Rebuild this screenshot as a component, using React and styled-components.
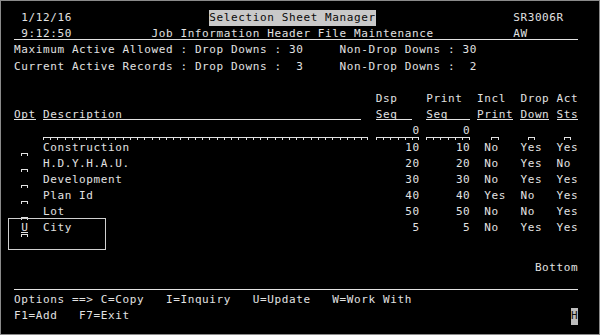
import React from "react";
import styled, { createGlobalStyle } from "styled-components";

// 5250 screen geometry, measured off the screenshot
const CH = 7.235;
const ROW = 16.2;
const COLS = 78;
const FG = "#e2e2e2";

const GlobalStyle = createGlobalStyle`
  html, body {
    margin: 0;
    padding: 0;
    background: #000;
  }
  body {
    width: 600px;
    height: 335px;
    overflow: hidden;
  }
`;

const Screen = styled.div`
  position: relative;
  box-sizing: border-box;
  width: 600px;
  height: 335px;
  padding: 9px 0 0 13px;
  background: #000;
  border: 1px solid #8a8a8a;
  color: ${FG};
  font-family: "DejaVu Sans Mono", "Liberation Mono", monospace;
  font-size: 11px;
  letter-spacing: ${(CH - 6.622).toFixed(3)}px;
`;

const Row = styled.div`
  display: grid;
  grid-template-columns: repeat(${COLS}, ${CH}px);
  grid-template-rows: ${ROW}px;
  width: ${COLS * CH}px;
  height: ${ROW}px;
  line-height: ${ROW}px;
  margin-top: ${(p) => p.$gap || 0}px;
  ${(p) =>
    p.$rule &&
    `background: linear-gradient(${FG}, ${FG}) no-repeat 0 13px / 100% 1px;`}
`;

const Rule = styled.div`
  width: ${COLS * CH}px;
  height: 1px;
  margin-top: ${(p) => p.$gap || 0}px;
  background: ${FG};
`;

const Field = styled.span`
  grid-row: 1;
  grid-column: ${(p) => p.$col + 1} / span ${(p) => p.$w};
  white-space: pre;
  text-align: ${(p) => (p.$right ? "right" : "left")};
  ${(p) => p.$right && `margin-right: -0.6px;`}
  ${(p) =>
    p.$under &&
    `background: linear-gradient(${FG}, ${FG}) no-repeat 0 12px / 100% 1px;`}
  ${(p) => p.$hi && `background: #c9c9c9; color: #0a0a0a;`}
  ${(p) => p.$cursor && `background: #bdbdbd; color: #111;`}
`;

// input field marker: underline with column separators
const Ticks = styled.span`
  grid-row: 1;
  grid-column: ${(p) => p.$col + 1} / span ${(p) => p.$w};
  align-self: end;
  box-sizing: border-box;
  height: 3px;
  border-top: 1px solid ${FG};
  border-right: 1px solid ${FG};
  background: repeating-linear-gradient(
    to right,
    ${FG} 0 1px,
    transparent 1px ${CH}px
  );
`;

const Callout = styled.div`
  position: absolute;
  left: 7px;
  top: 217px;
  width: 98px;
  height: 32px;
  box-sizing: border-box;
  border: 1.5px solid #d0d0d0;
`;

const T = ({ c, w, children, ...rest }) => (
  <Field $col={c} $w={w ?? String(children).length} {...rest}>
    {children}
  </Field>
);

const records = [
  { opt: "", desc: "Construction", dsp: 10, prt: 10, incl: "No", drop: "Yes", act: "Yes" },
  { opt: "", desc: "H.D.Y.H.A.U.", dsp: 20, prt: 20, incl: "No", drop: "Yes", act: "No" },
  { opt: "", desc: "Development", dsp: 30, prt: 30, incl: "No", drop: "Yes", act: "Yes" },
  { opt: "", desc: "Plan Id", dsp: 40, prt: 40, incl: "Yes", drop: "No", act: "Yes" },
  { opt: "", desc: "Lot", dsp: 50, prt: 50, incl: "No", drop: "No", act: "Yes" },
  { opt: "U", desc: "City", dsp: 5, prt: 5, incl: "No", drop: "Yes", act: "Yes" },
];

const App = () => {
  return (
    <Screen>
      <GlobalStyle />

      <Row>
        <T c={1}>1/12/16</T>
        <T c={27} $hi>Selection Sheet Manager</T>
        <T c={69}>SR3006R</T>
      </Row>
      <Row $rule>
        <T c={1}>9:12:50</T>
        <T c={19}>Job Information Header File Maintenance</T>
        <T c={69}>AW</T>
      </Row>
      <Row>
        <T c={0}>Maximum Active Allowed : Drop Downs : 30</T>
        <T c={45}>Non-Drop Downs : 30</T>
      </Row>
      <Row>
        <T c={0}>Current Active Records : Drop Downs :  3</T>
        <T c={45}>Non-Drop Downs :  2</T>
      </Row>
      <Row />
      <Row>
        <T c={50}>Dsp</T>
        <T c={57}>Print</T>
        <T c={64}>Incl</T>
        <T c={70}>Drop</T>
        <T c={75}>Act</T>
      </Row>
      <Row>
        <T c={0} $under>Opt</T>
        <T c={4} w={44} $under>Description</T>
        <T c={50} w={5} $under>Seq</T>
        <T c={57} w={6} $under>Seq</T>
        <T c={64} $under>Print</T>
        <T c={70} $under>Down</T>
        <T c={75} $under>Sts</T>
      </Row>
      <Row>
        <Ticks $col={4} $w={45} />
        <Ticks $col={50} $w={6} />
        <T c={50} w={6} $right>0</T>
        <Ticks $col={57} $w={6} />
        <T c={57} w={6} $right>0</T>
        <Ticks $col={66} $w={1} />
        <Ticks $col={71} $w={1} />
        <Ticks $col={76} $w={1} />
      </Row>

      {records.map((r) => (
        <Row key={r.desc}>
          <Ticks $col={1} $w={1} />
          {r.opt && (
            <T c={1} $under>
              {r.opt}
            </T>
          )}
          <T c={4}>{r.desc}</T>
          <T c={50} w={6} $right>
            {r.dsp}
          </T>
          <T c={57} w={6} $right>
            {r.prt}
          </T>
          <T c={65}>{r.incl}</T>
          <T c={70}>{r.drop}</T>
          <T c={75}>{r.act}</T>
        </Row>
      ))}

      <Row $gap={23.4}>
        <T c={72}>Bottom</T>
      </Row>
      <Rule $gap={12.6} />
      <Row $gap={2.4}>
        <T c={0}>Options ==&gt; C=Copy   I=Inquiry   U=Update   W=Work With</T>
      </Row>
      <Row>
        <T c={0}>F1=Add   F7=Exit</T>
        <T c={77} $cursor>H</T>
      </Row>

      <Callout />
    </Screen>
  );
};

export default App;
